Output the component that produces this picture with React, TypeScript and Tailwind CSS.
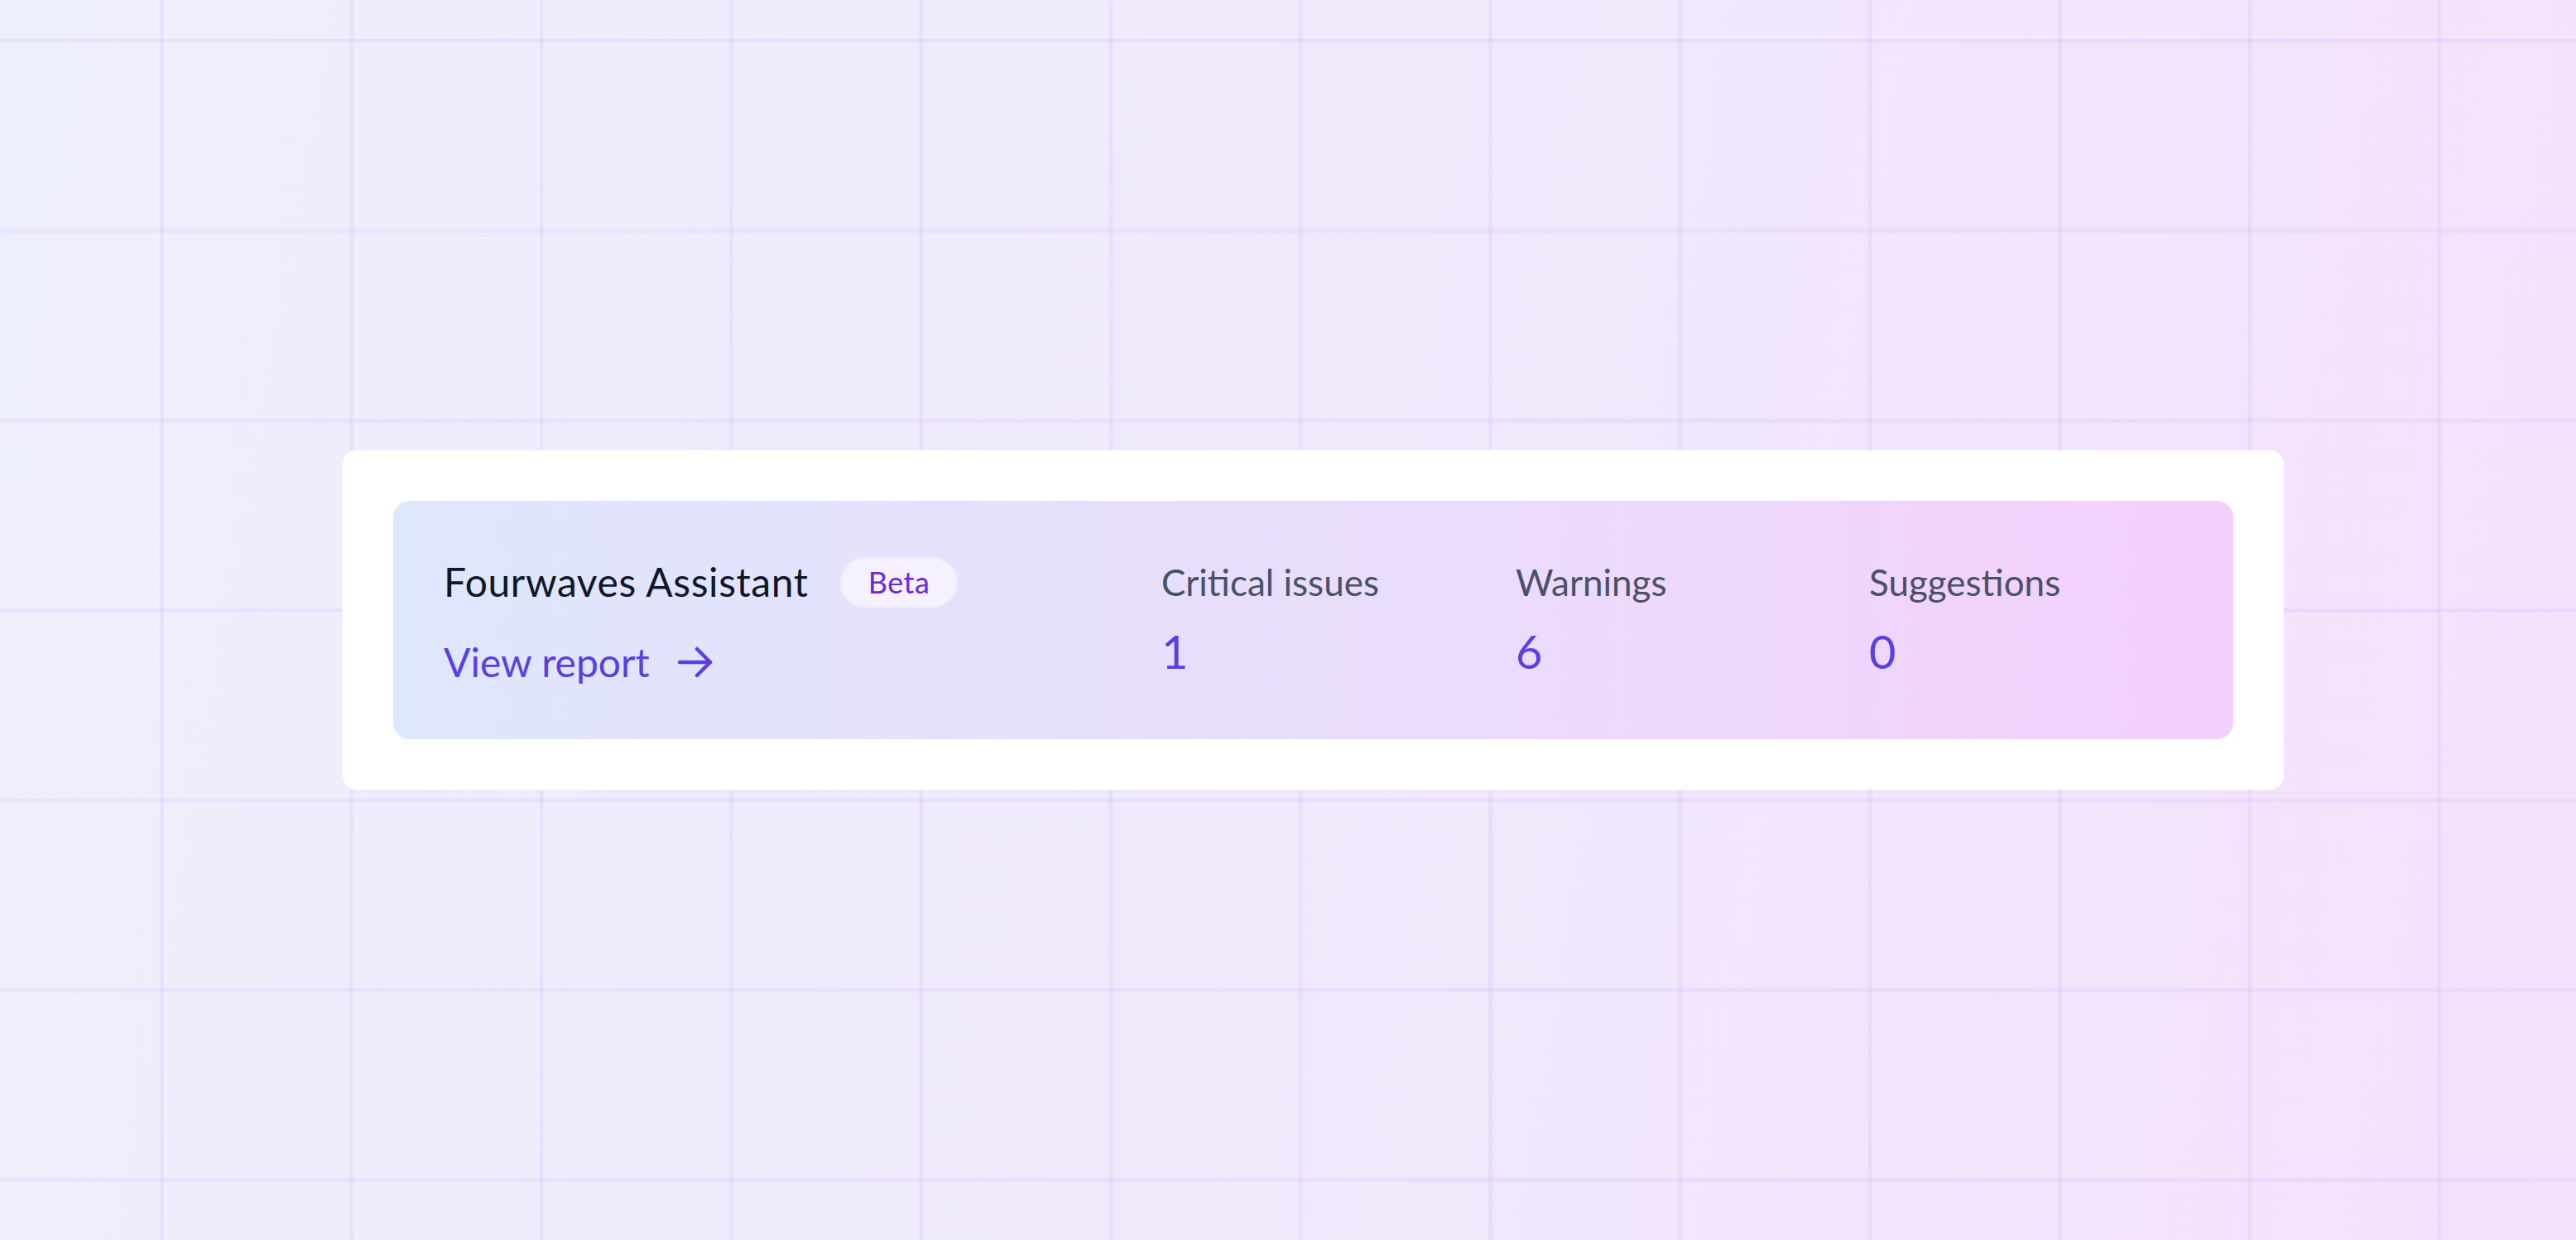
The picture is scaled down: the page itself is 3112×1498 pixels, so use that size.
export default function App() {
  const stats = [
    { label: "Critical issues", value: "1", w: "w-[428px]" },
    { label: "Warnings", value: "6", w: "w-[427px]" },
    { label: "Suggestions", value: "0", w: "flex-1" },
  ];
  return (
    <div className="h-[1498px] w-full flex items-center pl-[414px] font-['Lato',sans-serif] bg-[linear-gradient(to_right,rgba(139,92,246,0.075)_5px,transparent_5px),linear-gradient(to_bottom,rgba(139,92,246,0.075)_5px,transparent_5px),linear-gradient(100deg,#eeeffd_0%,#f0e9fc_50%,#f3e1fb_100%)] bg-[size:229.3px_229.3px,229.3px_229.3px,100%_100%] bg-[position:193px_0px,0px_47px,0px_0px]">
      <div className="w-[2345px] h-[410px] bg-white rounded-[16px] p-[61px] shrink-0">
        <div className="h-full rounded-[20px] bg-[linear-gradient(90deg,#dfe7fd_0%,#e6e0fc_35%,#ecdafc_65%,#f4cffc_100%)] flex items-center pl-[61px]">
          <div className="w-[867px] shrink-0 flex flex-col gap-[42px] -mt-[2px]">
            <div className="flex items-center h-[61px]">
              <span className="text-[48px] leading-[48px] tracking-[0.6px] text-[#0f172a]">Fourwaves Assistant</span>
              <span className="ml-[38px] h-[61px] px-[32px] rounded-full bg-[#f6f1ff] border-2 border-[#f1ecfe] text-[36px] leading-[36px] tracking-[0.5px] text-[#6d28d9] flex items-center">
                Beta
              </span>
            </div>
            <a className="flex items-center gap-[33px] text-[48px] leading-[48px] text-[#5b3fe0]">
              <span>View report</span>
              <svg width="44" height="38" viewBox="0 0 44 38" fill="none" stroke="#5b3fe0" strokeWidth="4.5" strokeLinecap="round" strokeLinejoin="round">
                <path d="M3 19H40" />
                <path d="M24 3L40 19L24 35" />
              </svg>
            </a>
          </div>
          {stats.map((s) => (
            <div key={s.label} className={`${s.w} flex flex-col gap-[34px] -mt-[2px]`}>
              <div className="text-[44px] leading-[44px] text-[#4a5068]">{s.label}</div>
              <div className="text-[56px] leading-[56px] text-[#5a3fe3]">{s.value}</div>
            </div>
          ))}
        </div>
      </div>
    </div>
  );
}
